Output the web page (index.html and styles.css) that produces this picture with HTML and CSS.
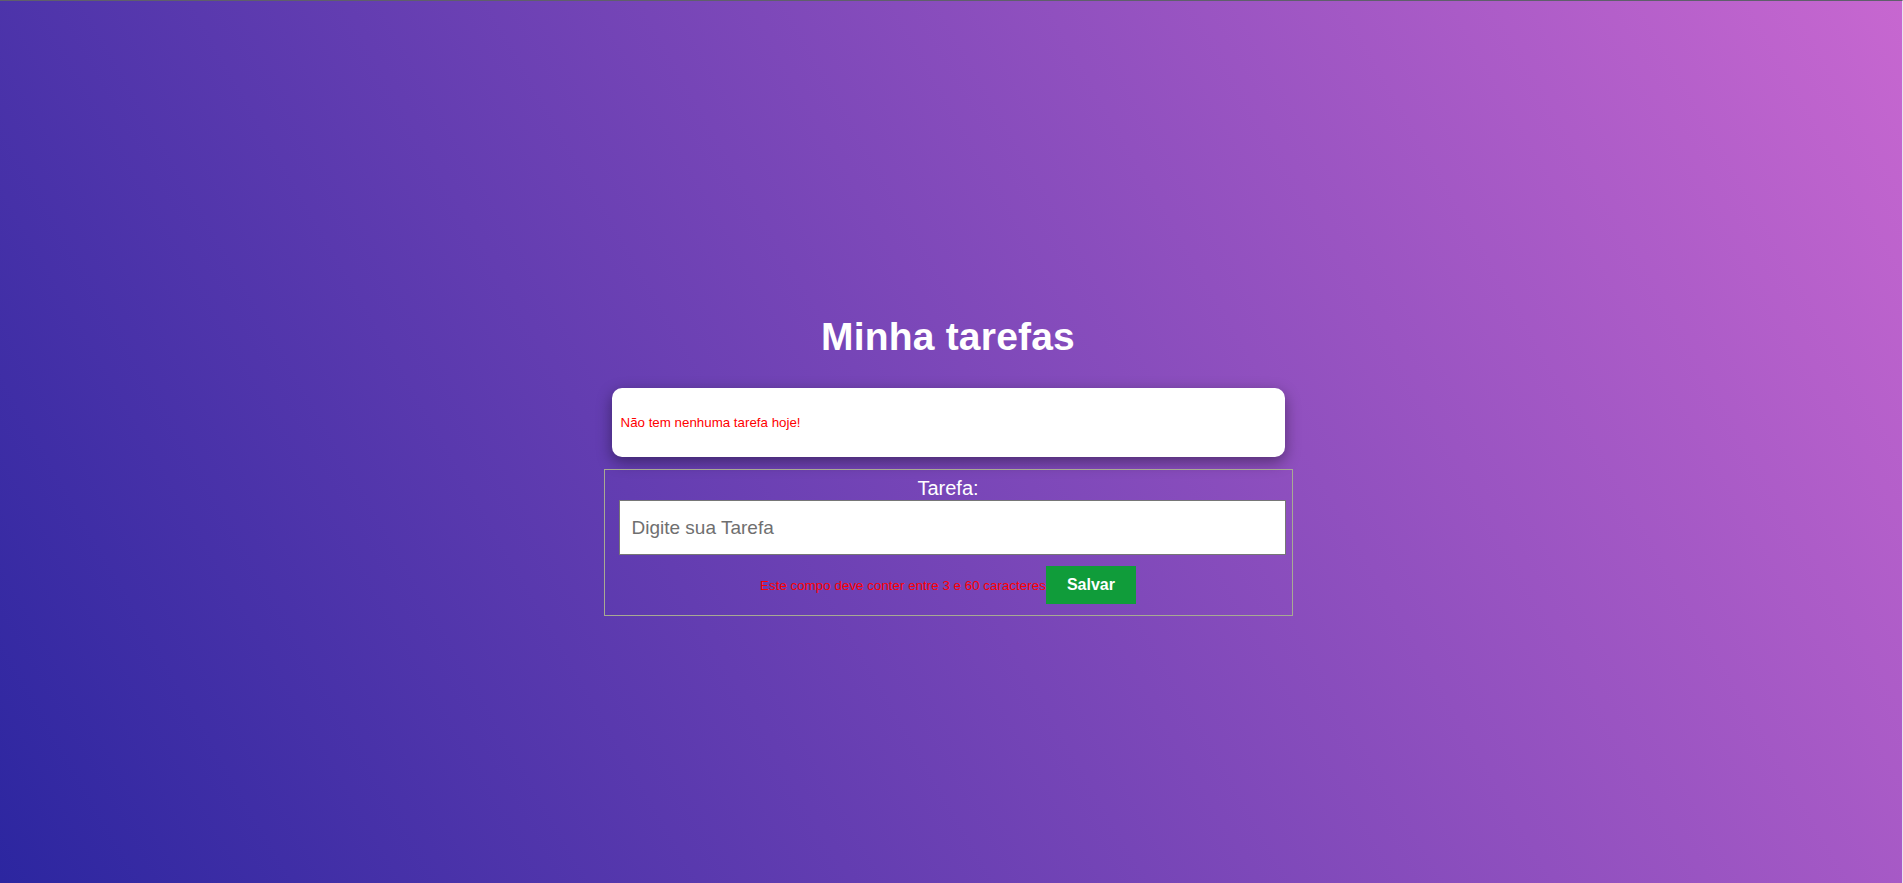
FILE: index.html
```html
<!DOCTYPE html>
<html lang="pt-BR">
<head>
<meta charset="utf-8">
<title>Minha tarefas</title>
<link rel="stylesheet" href="styles.css">
</head>
<body>
<div class="page">
  <main class="app">
    <h1 class="title">Minha tarefas</h1>
    <div class="list-card">
      <p class="empty">Não tem nenhuma tarefa hoje!</p>
    </div>
    <form class="task-form">
      <label class="label" for="task">Tarefa:</label>
      <input id="task" class="input" type="text" placeholder="Digite sua Tarefa">
      <div class="actions">
        <span class="error">Este compo deve conter entre 3 e 60 caracteres</span>
        <button type="button" class="save">Salvar</button>
      </div>
    </form>
  </main>
</div>
</body>
</html>
```

FILE: styles.css
```css
html, body {
  margin: 0;
  height: 100%;
}

body {
  font-family: "Liberation Sans", Arial, Helvetica, sans-serif;
}

.page {
  height: 100vh;
  box-sizing: border-box;
  border-top: 1px solid #5f5f6b;
  border-right: 1px solid #ece4f0;
  background: linear-gradient(60deg, #2c26a0 0%, #c767d0 100%);
  display: flex;
  justify-content: center;
  padding-top: 314px;
  padding-right: 6px;
}

.app {
  width: 689px;
  display: flex;
  flex-direction: column;
  align-items: center;
}

.title {
  margin: 0 0 29px;
  font-size: 39px;
  letter-spacing: 0.2px;
  line-height: 44px;
  font-weight: bold;
  color: #fff;
}

.list-card {
  width: 673px;
  height: 69px;
  box-sizing: border-box;
  background: #fff;
  border-radius: 10px;
  box-shadow: 0 5px 15px rgba(0, 0, 0, 0.4);
  padding: 0 9px;
  display: flex;
  align-items: center;
  margin-bottom: 12px;
}

.empty {
  margin: 0;
  color: #ff0000;
  font-size: 13.33px;
}

.task-form {
  width: 689px;
  box-sizing: border-box;
  border: 1px solid #a8aa92;
  padding: 7px 0 11px;
  display: flex;
  flex-direction: column;
}

.label {
  text-align: center;
  color: #fff;
  font-size: 20px;
  line-height: 23px;
}

.input {
  margin: 0 0 0 14px;
  width: 667px;
  height: 55px;
  box-sizing: border-box;
  border: 1px solid #767676;
  padding: 0 12px;
  font-size: 19px;
  font-family: inherit;
  background: #fff;
  outline: none;
}

.input::placeholder {
  color: #6f6f6f;
}

.actions {
  display: flex;
  justify-content: center;
  align-items: center;
  margin-top: 11px;
}

.error {
  color: #ff0000;
  font-size: 13.4px;
}

.save {
  background: #109c3a;
  color: #fff;
  border: 0;
  border-radius: 0;
  font-family: inherit;
  font-weight: bold;
  font-size: 16px;
  height: 38px;
  line-height: 38px;
  padding: 0 21px;
}
```
